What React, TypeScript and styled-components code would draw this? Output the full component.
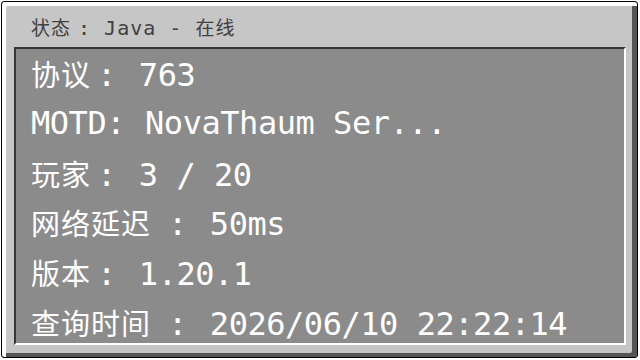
import React from "react";
import styled, { createGlobalStyle } from "styled-components";

const MONO = `"DejaVu Sans Mono", "Liberation Mono", monospace`;
const CJK = `"Noto Sans CJK SC", "Noto Sans", sans-serif`;

const GlobalStyle = createGlobalStyle`
  html, body {
    margin: 0;
    padding: 0;
    background: #ffffff;
  }
  #root {
    width: 640px;
    height: 360px;
    overflow: hidden;
  }
`;

const Frame = styled.div`
  box-sizing: border-box;
  margin: 1px;
  width: 637px;
  height: 357px;
  border: 1px solid #000000;
  border-radius: 3px;
  background: #c6c6c6;
  box-shadow: inset 4px 4px 0 #ffffff, inset -5px -4px 0 #555555;
  display: flex;
  flex-direction: column;
  padding: 0 11px 12px 12px;
`;

const Title = styled.div`
  box-sizing: border-box;
  height: 45px;
  flex: 0 0 45px;
  display: flex;
  align-items: baseline;
  padding: 10px 0 0 17px;
  line-height: 30px;
  color: #404040;
`;

const TitleCjk = styled.span`
  font-family: ${CJK};
  font-size: 19px;
  letter-spacing: 1px;
`;

const TitleLatin = styled.span<{ $lead?: number }>`
  font-family: ${MONO};
  font-size: 20px;
  letter-spacing: 1px;
  white-space: pre;
  margin-left: ${(p) => p.$lead ?? 0}px;
`;

const Panel = styled.div`
  flex: 1;
  min-height: 0;
  background: #8b8b8b;
  border-style: solid;
  border-width: 2px;
  border-color: #373737 #ffffff #ffffff #373737;
  padding-left: 15px;
  display: flex;
  flex-direction: column;
  color: #ffffff;
`;

const Row = styled.div`
  flex: 0 0 49.8px;
  height: 49.8px;
  display: flex;
  align-items: baseline;
  line-height: 49.8px;
  white-space: pre;
`;

const Label = styled.span<{ $cjk: boolean }>`
  font-family: ${(p) => (p.$cjk ? CJK : MONO)};
  font-size: ${(p) => (p.$cjk ? 29 : 32)}px;
  letter-spacing: ${(p) => (p.$cjk ? 1 : -0.46)}px;
`;

const Colon = styled.span<{ $gap: number }>`
  font-family: ${MONO};
  font-size: 32px;
  letter-spacing: -0.46px;
  margin-left: ${(p) => p.$gap}px;
`;

const Value = styled.span<{ $lead: number }>`
  font-family: ${MONO};
  font-size: 32px;
  letter-spacing: -0.46px;
  margin-left: ${(p) => p.$lead}px;
`;

type Info = { label: string; value: string; gap: number; lead: number };

const rows: Info[] = [
  { label: "协议", value: "763", gap: 6, lead: 23 },
  { label: "MOTD", value: "NovaThaum Ser...", gap: 0, lead: 20 },
  { label: "玩家", value: "3 / 20", gap: 6, lead: 23 },
  { label: "网络延迟", value: "50ms", gap: 17, lead: 23 },
  { label: "版本", value: "1.20.1", gap: 6, lead: 23 },
  { label: "查询时间", value: "2026/06/10 22:22:14", gap: 17, lead: 23 },
];

const isCjk = (s: string) => /[\u3400-\u9fff]/.test(s);

export default function App() {
  return (
    <>
      <GlobalStyle />
      <Frame>
        <Title>
          <TitleCjk>状态</TitleCjk>
          <TitleLatin $lead={7}>: Java - </TitleLatin>
          <TitleCjk>在线</TitleCjk>
        </Title>
        <Panel>
          {rows.map((r) => (
            <Row key={r.label}>
              <Label $cjk={isCjk(r.label)}>{r.label}</Label>
              <Colon $gap={r.gap}>:</Colon>
              <Value $lead={r.lead}>{r.value}</Value>
            </Row>
          ))}
        </Panel>
      </Frame>
    </>
  );
}
